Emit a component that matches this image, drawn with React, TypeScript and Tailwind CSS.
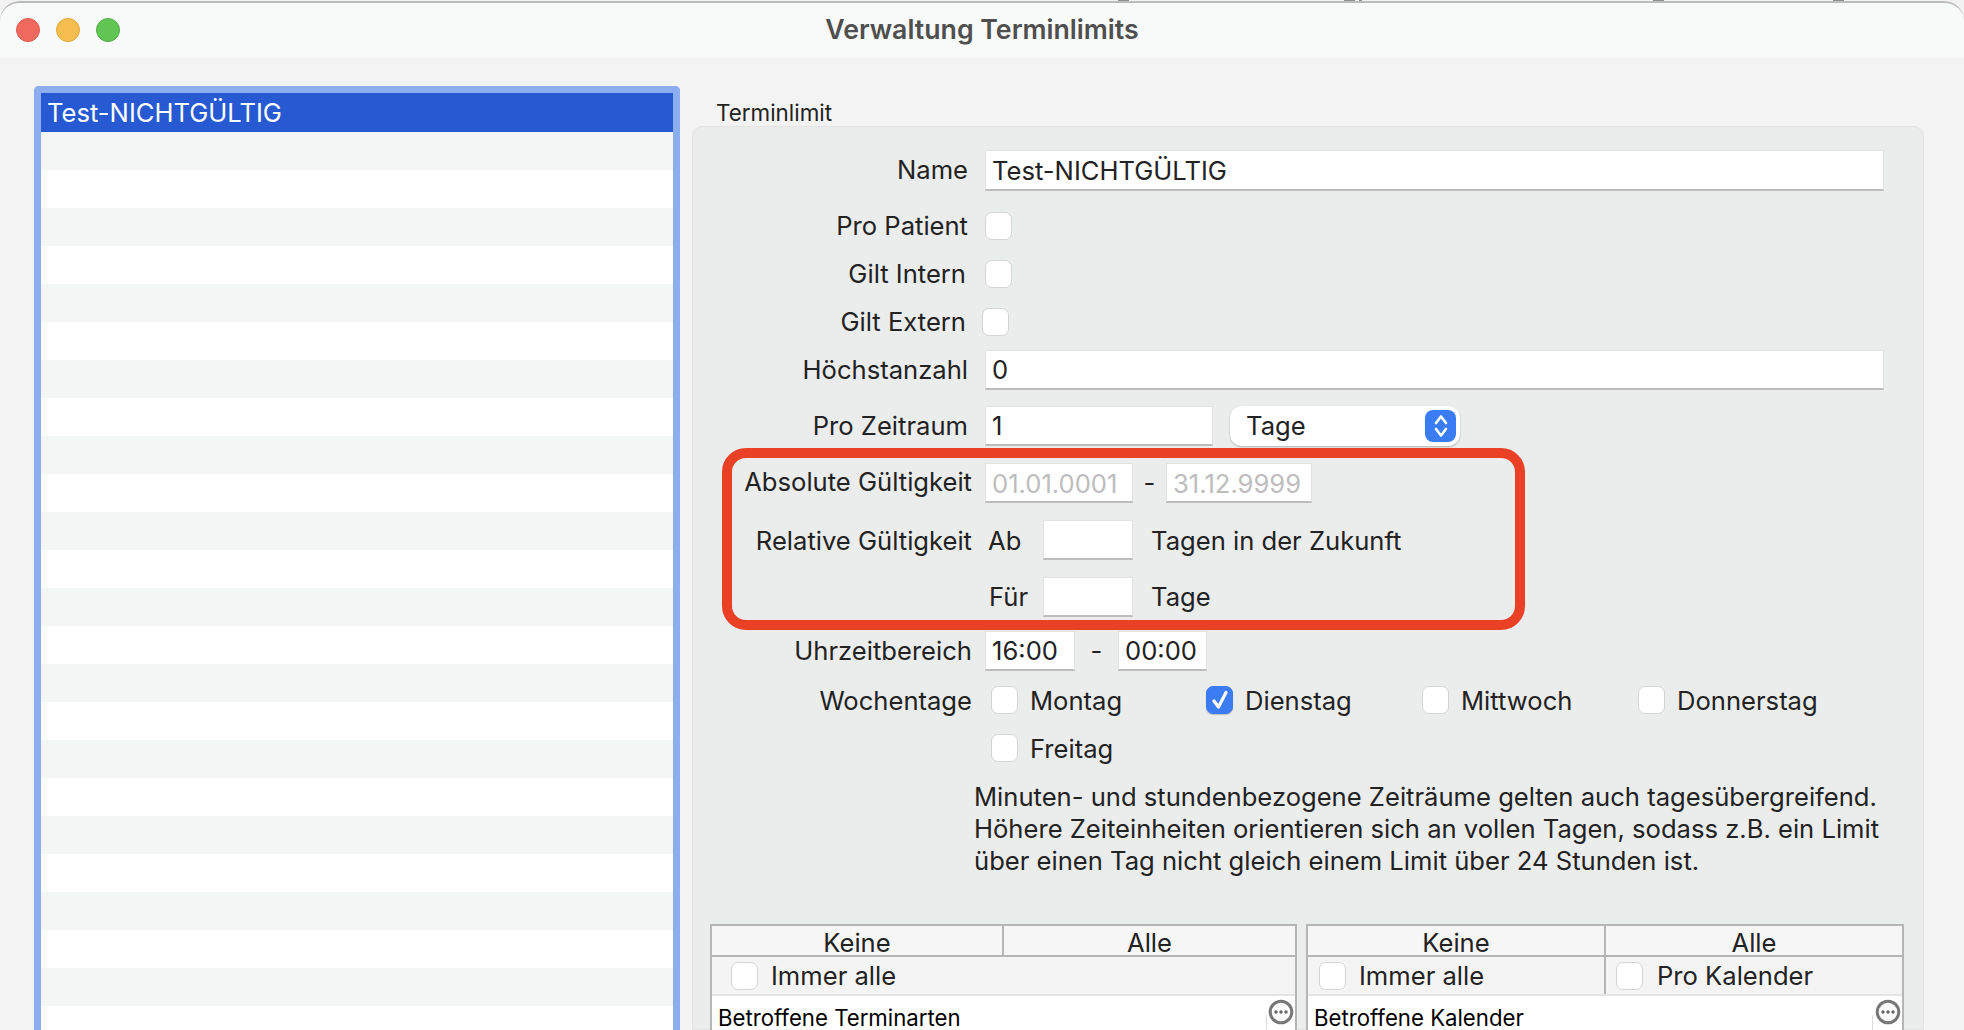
import React from 'react';

const font = "font-['Inter','Liberation_Sans',sans-serif]";

const Checkbox = ({ checked = false, className = '' }: { checked?: boolean; className?: string }) => (
    <div
        className={`w-[27px] h-[28px] shrink-0 rounded-[7px] flex items-center justify-center ${
            checked
                ? 'bg-[#3b7cf2] border border-[#3b7cf2] shadow-[0_1px_1px_rgba(0,0,0,0.2)]'
                : 'bg-white border border-[#d4d4d4]'
        } ${className}`}
    >
        {checked && (
            <svg width="20" height="22" viewBox="0 0 20 22" fill="none">
                <path d="M4 12 L8.5 18 L16 3.5" stroke="white" strokeWidth="3.2" strokeLinecap="round" strokeLinejoin="round" />
            </svg>
        )}
    </div>
);

const Field = ({ value = '', muted = false, className = '' }: { value?: string; muted?: boolean; className?: string }) => (
    <div
        className={`h-[40px] bg-white border border-[#e2e2e2] border-b-2 border-b-[#bdbdbd] pl-[6px] pt-[2px] flex items-center shrink-0 ${
            muted ? 'text-[#bdbdbd]' : 'text-[#222222]'
        } ${className}`}
    >
        {value}
    </div>
);

const More = () => (
    <svg width="26" height="26" viewBox="0 0 26 26" className="shrink-0">
        <circle cx="13" cy="13" r="10.8" fill="#fafafa" stroke="#777777" strokeWidth="3" />
        <circle cx="8" cy="13" r="1.7" fill="#666666" />
        <circle cx="13" cy="13" r="1.7" fill="#666666" />
        <circle cx="18" cy="13" r="1.7" fill="#666666" />
    </svg>
);

const Day = ({ label, checked = false, className = '' }: { label: string; checked?: boolean; className?: string }) => (
    <div className={`flex items-center ${className}`}>
        <Checkbox checked={checked} />
        <span className="ml-[12px] pt-[2px]">{label}</span>
    </div>
);

export default function App() {
    const rows = Array.from({ length: 24 }, (_, i) => i);
    return (
        <div className={`w-[1964px] h-[1030px] overflow-hidden bg-[#f2f2f2] relative ${font} text-[25.6px] text-[#222222]`}>
            {/* bits of the window behind */}
            <div className="absolute left-[1118px] top-0 w-[11px] h-[3px] bg-[#8f8f8f]" />
            <div className="absolute left-[1344px] top-0 w-[11px] h-[3px] bg-[#8f8f8f]" />
            <div className="absolute left-[1359px] top-0 w-[3px] h-[3px] bg-[#8f8f8f]" />
            <div className="absolute left-[1653px] top-0 w-[11px] h-[3px] bg-[#8f8f8f]" />
            <div className="absolute left-[1833px] top-0 w-[11px] h-[3px] bg-[#8f8f8f]" />

            <div className="h-[57px] mt-px rounded-t-[20px] border-t-2 border-[#bcbcbc] bg-[#f8faf9] relative flex items-center justify-center">
                <div className="absolute left-[16px] top-[15px] flex gap-[16px]">
                    <div className="w-[24px] h-[24px] rounded-full bg-[#f0695f] border border-[#dd5a50]" />
                    <div className="w-[24px] h-[24px] rounded-full bg-[#f6be4f] border border-[#dfa63b]" />
                    <div className="w-[24px] h-[24px] rounded-full bg-[#61c554] border border-[#52ad45]" />
                </div>
                <span className="text-[26.7px] font-semibold text-[#4f4f4f] -mt-[2px]">Verwaltung Terminlimits</span>
            </div>

            <div className="h-[972px] bg-[#f3f3f3] flex pl-[34px] pt-[28px]">
                {/* list */}
                <div className="w-[646px] h-[944px] border-[7px] border-b-0 border-[#8caef0] rounded-t-[5px] overflow-hidden shrink-0 bg-white">
                    <div className="h-[39px] bg-[#2659d2] text-white pl-[6px] pt-[2px] flex items-center">Test-NICHTGÜLTIG</div>
                    {rows.map(i => (
                        <div key={i} className={`h-[38px] ${i % 2 === 0 ? 'bg-[#f4f5f5]' : 'bg-white'}`} />
                    ))}
                </div>

                {/* form */}
                <div className="ml-[12px] w-[1232px] shrink-0">
                    <div className="h-[40px] pl-[24px] text-[22.4px] leading-[54px]">Terminlimit</div>
                    <div className="h-[904px] bg-[#ebecec] border border-[#e3e3e3] rounded-t-[10px] pt-[23px]">
                        <div className="flex items-center">
                            <span className="w-[275px] text-right">Name</span>
                            <Field value="Test-NICHTGÜLTIG" className="ml-[17px] w-[899px] h-[41px]" />
                        </div>
                        <div className="flex items-center mt-[21px] h-[28px]">
                            <span className="w-[275px] text-right">Pro Patient</span>
                            <Checkbox className="ml-[17px]" />
                        </div>
                        <div className="flex items-center mt-[20px] h-[28px]">
                            <span className="w-[273px] text-right">Gilt Intern</span>
                            <Checkbox className="ml-[19px]" />
                        </div>
                        <div className="flex items-center mt-[20px] h-[28px]">
                            <span className="w-[273px] text-right">Gilt Extern</span>
                            <Checkbox className="ml-[16px]" />
                        </div>
                        <div className="flex items-center mt-[14px]">
                            <span className="w-[275px] text-right">Höchstanzahl</span>
                            <Field value="0" className="ml-[17px] w-[899px]" />
                        </div>
                        <div className="flex items-end mt-[16px] h-[40px]">
                            <span className="w-[275px] text-right self-center">Pro Zeitraum</span>
                            <Field value="1" className="ml-[17px] w-[228px] h-[38px]" />
                            <div className="ml-[17px] w-[230px] h-[40px] bg-white rounded-[12px] shadow-[0_1px_2px_rgba(0,0,0,0.25)] flex items-center justify-between pl-[16px] pr-[4px]">
                                <span>Tage</span>
                                <div className="w-[31px] h-[32px] rounded-[8px] bg-[#3b7cf2] flex items-center justify-center">
                                    <svg width="18" height="26" viewBox="0 0 18 26" fill="none">
                                        <path d="M4 10 L9 3.5 L14 10 M4 16 L9 22.5 L14 16" stroke="white" strokeWidth="2.6" strokeLinecap="round" strokeLinejoin="round" />
                                    </svg>
                                </div>
                            </div>
                        </div>

                        {/* highlight frame */}
                        <div className="ml-[29px] mt-[2px] w-[803px] h-[182px] border-[10px] border-[#ea4026] rounded-[24px] pt-[5px]">
                            <div className="flex items-center">
                                <span className="w-[240px] text-right pb-[2px]">Absolute Gültigkeit</span>
                                <Field value="01.01.0001" muted className="ml-[13px] w-[148px]" />
                                <span className="w-[33px] text-center">-</span>
                                <Field value="31.12.9999" muted className="w-[146px]" />
                            </div>
                            <div className="flex items-center mt-[16px]">
                                <span className="w-[240px] text-right pt-[3px]">Relative Gültigkeit</span>
                                <span className="ml-[16px] w-[55px] pt-[3px]">Ab</span>
                                <Field className="w-[90px]" />
                                <span className="ml-[18px] pt-[3px]">Tagen in der Zukunft</span>
                            </div>
                            <div className="flex items-center mt-[16px]">
                                <span className="ml-[257px] w-[54px] pt-[1px]">Für</span>
                                <Field className="w-[90px]" />
                                <span className="ml-[18px] pt-[1px]">Tage</span>
                            </div>
                        </div>

                        <div className="flex items-center mt-px">
                            <span className="w-[279px] text-right pt-[1px]">Uhrzeitbereich</span>
                            <Field value="16:00" className="ml-[13px] w-[90px]" />
                            <span className="w-[43px] text-center">-</span>
                            <Field value="00:00" className="w-[89px]" />
                        </div>
                        <div className="flex items-center mt-[15px] h-[28px]">
                            <span className="w-[279px] text-right pt-[2px]">Wochentage</span>
                            <Day label="Montag" className="ml-[19px] w-[215px]" />
                            <Day label="Dienstag" checked className="w-[216px]" />
                            <Day label="Mittwoch" className="w-[216px]" />
                            <Day label="Donnerstag" />
                        </div>
                        <div className="flex items-center mt-[20px] h-[28px]">
                            <Day label="Freitag" className="ml-[298px]" />
                        </div>
                        <div className="ml-[281px] mt-[19px] leading-[32px] whitespace-nowrap">
                            <div>Minuten- und stundenbezogene Zeiträume gelten auch tagesübergreifend.</div>
                            <div>Höhere Zeiteinheiten orientieren sich an vollen Tagen, sodass z.B. ein Limit</div>
                            <div>über einen Tag nicht gleich einem Limit über 24 Stunden ist.</div>
                        </div>

                        {/* tables */}
                        <div className="flex ml-[17px] mt-[47px] gap-[9px]">
                            <div className="w-[587px] shrink-0 border-2 border-b-0 border-[#b5b5b5]">
                                <div className="flex h-[31px] border-b-2 border-[#b5b5b5] bg-[#f6f6f6]">
                                    <div className="w-[292px] border-r-2 border-[#b5b5b5] text-center leading-[34px]">Keine</div>
                                    <div className="flex-1 text-center leading-[34px]">Alle</div>
                                </div>
                                <div className="flex items-center h-[37px] bg-[#f4f4f4] pl-[19px]">
                                    <Checkbox />
                                    <span className="ml-[13px] pt-[2px]">Immer alle</span>
                                </div>
                                <div className="h-[36px] bg-white border-t-2 border-[#e4e4e4] pl-[6px] pt-[9px] relative text-[22.2px] leading-[25px] text-black">
                                    Betroffene Terminarten
                                    <div className="absolute right-[1px] top-[3px]"><More /></div>
                                    <div className="absolute right-[28px] top-[19px] w-px h-[16px] bg-[#dddddd]" />
                                </div>
                            </div>
                            <div className="w-[598px] shrink-0 border-2 border-b-0 border-[#b5b5b5]">
                                <div className="flex h-[31px] border-b-2 border-[#b5b5b5] bg-[#f6f6f6]">
                                    <div className="w-[298px] border-r-2 border-[#b5b5b5] text-center leading-[34px]">Keine</div>
                                    <div className="flex-1 text-center leading-[34px]">Alle</div>
                                </div>
                                <div className="flex h-[37px] bg-[#f4f4f4]">
                                    <div className="w-[298px] border-r-2 border-[#b5b5b5] flex items-center pl-[11px]">
                                        <Checkbox />
                                        <span className="ml-[13px] pt-[2px]">Immer alle</span>
                                    </div>
                                    <div className="flex items-center pl-[10px]">
                                        <Checkbox />
                                        <span className="ml-[14px] pt-[2px]">Pro Kalender</span>
                                    </div>
                                </div>
                                <div className="h-[36px] bg-white border-t-2 border-[#e4e4e4] pl-[6px] pt-[9px] relative text-[22.2px] leading-[25px] text-black">
                                    Betroffene Kalender
                                    <div className="absolute right-[1px] top-[3px]"><More /></div>
                                    <div className="absolute right-[29px] top-[19px] w-px h-[16px] bg-[#dddddd]" />
                                </div>
                            </div>
                        </div>
                    </div>
                </div>
            </div>
        </div>
    );
}
